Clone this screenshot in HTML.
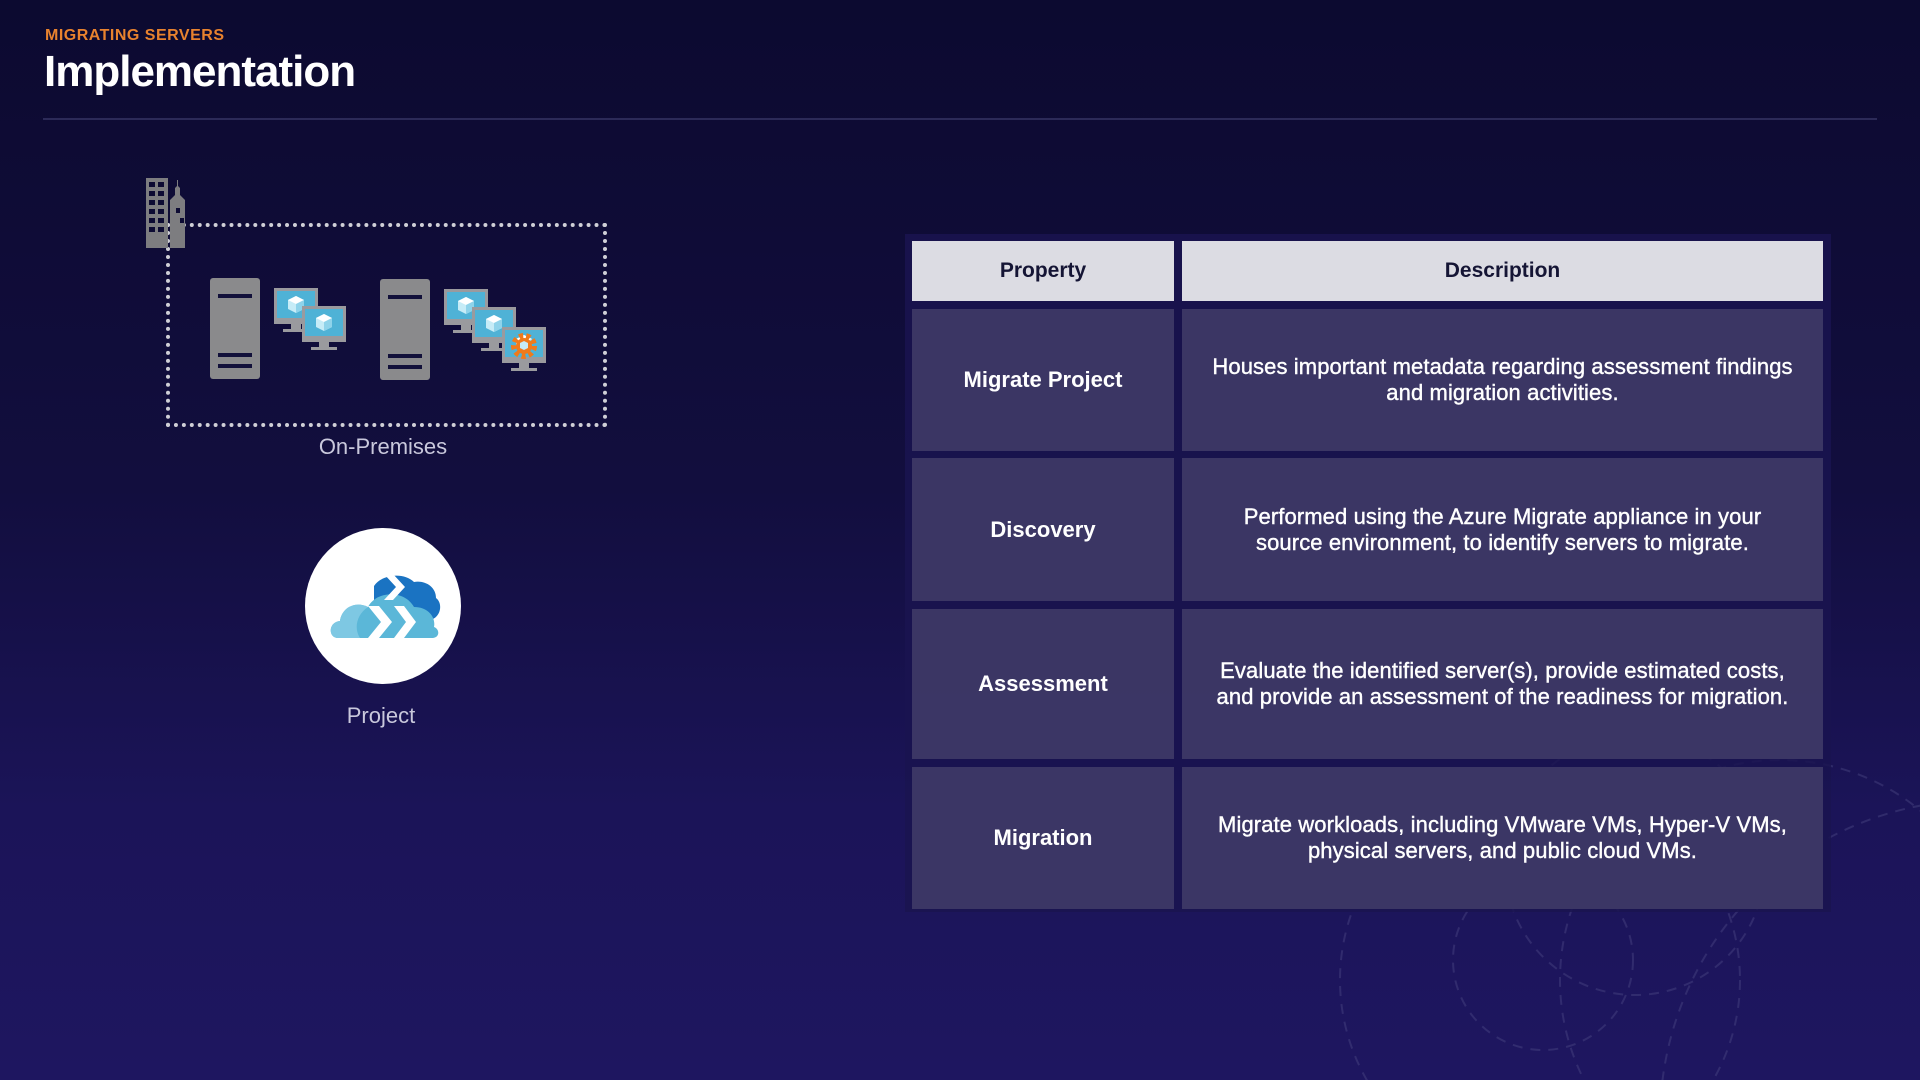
<!DOCTYPE html>
<html style="overflow:hidden;width:1920px;height:1080px"><head><meta charset="utf-8"><style>
*{margin:0;padding:0;box-sizing:border-box}
body{width:1920px;height:1080px;overflow:hidden;position:relative;font-family:"Liberation Sans",sans-serif;background:linear-gradient(180deg,#0c0a30 0%,#120e3e 45%,#1b1458 75%,#1e1660 100%)}
.abs{position:absolute}
.kick{left:45px;top:27px;color:#e8822e;font-weight:700;font-size:16px;letter-spacing:0.5px}
.title{left:44px;top:47px;color:#fff;font-weight:700;font-size:44px;letter-spacing:-1px}
.line{left:43px;top:118px;width:1834px;height:2px;background:#2c2a58}
.lbl{color:#c9c8dc;font-size:22px;text-align:center;width:300px}
.tbl{left:905px;top:234px;width:926px;height:678px;background:rgba(26,20,80,0.85)}
.c{position:absolute;display:flex;align-items:center;justify-content:center;text-align:center;color:#fff;font-weight:700;font-size:22px;line-height:26px;background:rgba(62,56,102,0.94)}
.h{background:#dcdce3;color:#151535;font-size:21px}
.d{font-weight:400;font-size:22px;-webkit-text-stroke:0.4px #fff;padding:0 4px;letter-spacing:0.1px}
</style></head><body>
<svg class="abs" style="left:1280px;top:720px" width="640" height="360" viewBox="0 0 640 360" fill="none" stroke="#5a5690" stroke-opacity="0.35" stroke-width="2" stroke-dasharray="10 8">
<circle cx="500" cy="260" r="220"/><circle cx="260" cy="260" r="200"/><circle cx="263" cy="240" r="90"/><circle cx="355" cy="145" r="130"/><circle cx="700" cy="400" r="320"/>
</svg>
<div class="abs kick">MIGRATING SERVERS</div>
<div class="abs title">Implementation</div>
<div class="abs line"></div>

<div class="abs" style="left:166px;top:223px;width:441px;height:204px;border:4px dotted #cfcfd6"></div>
<svg class="abs" style="left:146px;top:178px" width="46" height="70" viewBox="0 0 46 70">
<rect x="0" y="0" width="22" height="70" fill="#7d7d80"/>
<g fill="#0d0b33"><rect x="3" y="4" width="6" height="5"/><rect x="12" y="4" width="6" height="5"/><rect x="3" y="13" width="6" height="5"/><rect x="12" y="13" width="6" height="5"/><rect x="3" y="22" width="6" height="5"/><rect x="12" y="22" width="6" height="5"/><rect x="3" y="31" width="6" height="5"/><rect x="12" y="31" width="6" height="5"/><rect x="3" y="40" width="6" height="5"/><rect x="12" y="40" width="6" height="5"/><rect x="3" y="49" width="6" height="5"/><rect x="12" y="49" width="6" height="5"/></g>
<path d="M24 70V22l5-5V10l2-2V2h1v6l2 2v7l5 5v48z" fill="#7d7d80"/>
<rect x="30" y="30" width="4" height="5" fill="#0d0b33"/><rect x="34" y="40" width="4" height="5" fill="#0d0b33"/>
</svg>
<svg class="abs" style="left:210px;top:278px" width="60" height="102"><rect x="0" y="0" width="50" height="101" rx="3" fill="#8a8a8c"/><rect x="8" y="16" width="34" height="4" fill="#12103a"/><rect x="8" y="75" width="34" height="4" fill="#12103a"/><rect x="8" y="86" width="34" height="4" fill="#12103a"/></svg>
<svg class="abs" style="left:380px;top:279px" width="60" height="102"><rect x="0" y="0" width="50" height="101" rx="3" fill="#8a8a8c"/><rect x="8" y="16" width="34" height="4" fill="#12103a"/><rect x="8" y="75" width="34" height="4" fill="#12103a"/><rect x="8" y="86" width="34" height="4" fill="#12103a"/></svg>
<svg width="0" height="0" style="position:absolute"><defs>
<g id="mon"><rect x="0" y="0" width="44" height="36" fill="#9a9a9e"/><rect x="3" y="3" width="38" height="27" fill="#4fb2d6"/><rect x="17" y="36" width="10" height="5" fill="#9a9a9e"/><rect x="9" y="41" width="26" height="3" fill="#9a9a9e"/><path d="M22 8l8 4v9l-8 4-8-4v-9z" fill="#c6ecf7"/><path d="M22 8l8 4-8 4-8-4z" fill="#fff"/><path d="M22 16v9l8-4v-9z" fill="#8fd3ea"/></g>
</defs></svg>
<svg class="abs" style="left:274px;top:288px" width="80" height="64"><use href="#mon"/><use href="#mon" x="28" y="18"/></svg>
<svg class="abs" style="left:444px;top:289px" width="110" height="84"><use href="#mon"/><use href="#mon" x="28" y="18"/><use href="#mon" x="58" y="38"/>
<g transform="translate(80,57)"><circle r="10" fill="none" stroke="#f07a1a" stroke-width="6" stroke-dasharray="4 3"/><circle r="8" fill="#f07a1a"/><path d="M0 -5l4 2v5l-4 2-4-2v-5z" fill="#c6ecf7"/></g></svg>
<div class="abs lbl" style="left:233px;top:434px">On-Premises</div>

<div class="abs" style="left:305px;top:528px;width:156px;height:156px;border-radius:50%;background:#fff"></div>
<svg class="abs" style="left:330px;top:566px" width="116" height="80" viewBox="0 0 116 80">
<path d="M44 20c8-12 30-14 40-4 10-2 22 4 22 16 8 6 4 22-8 22H44z" fill="#1a73c2"/>
<path d="M8 72c-10 0-10-16 2-17 2-14 16-20 28-14 8-16 36-18 46 0 14 0 22 10 20 20 6 2 6 11-2 11z" fill="#5bb7d8"/>
<path d="M8 72c-10 0-10-16 2-17 2-14 16-20 28-14-12 8-14 22-8 31z" fill="#7ec8e3"/>
<g fill="#fff"><path d="M38 40h11l13 16-13 16H38l13-16z"/><path d="M64 40h10l12 16-12 16H64l12-16z"/><path d="M54 8h9l12 13-12 13h-9l12-13z"/></g>
</svg>
<div class="abs lbl" style="left:231px;top:703px">Project</div>

<div class="abs tbl"></div>
<div class="c h" style="left:912px;top:241px;width:262px;height:60px">Property</div>
<div class="c h" style="left:1182px;top:241px;width:641px;height:60px">Description</div>
<div class="c" style="left:912px;top:309px;width:262px;height:142px">Migrate Project</div>
<div class="c d" style="left:1182px;top:309px;width:641px;height:142px">Houses important metadata regarding assessment findings<br>and migration activities.</div>
<div class="c" style="left:912px;top:458px;width:262px;height:143px">Discovery</div>
<div class="c d" style="left:1182px;top:458px;width:641px;height:143px">Performed using the Azure Migrate appliance in your<br>source environment, to identify servers to migrate.</div>
<div class="c" style="left:912px;top:609px;width:262px;height:150px">Assessment</div>
<div class="c d" style="left:1182px;top:609px;width:641px;height:150px">Evaluate the identified server(s), provide estimated costs,<br>and provide an assessment of the readiness for migration.</div>
<div class="c" style="left:912px;top:767px;width:262px;height:142px">Migration</div>
<div class="c d" style="left:1182px;top:767px;width:641px;height:142px">Migrate workloads, including VMware VMs, Hyper-V VMs,<br>physical servers, and public cloud VMs.</div>
</body></html>
